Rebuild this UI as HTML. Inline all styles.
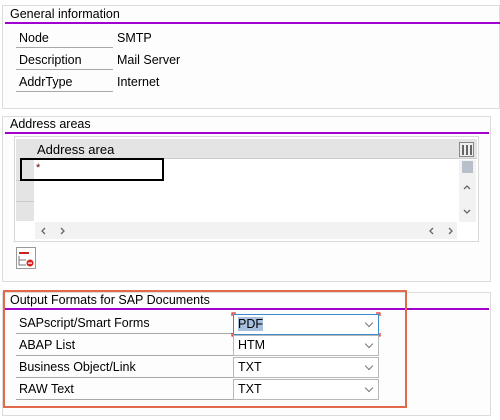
<!DOCTYPE html>
<html><head><style>
*{box-sizing:border-box;margin:0;padding:0}
body{width:500px;height:420px;background:#fff;font-family:"Liberation Sans","DejaVu Sans",sans-serif;font-size:12.5px;color:#000;position:relative;overflow:hidden}
.a{position:absolute}
.grp{position:absolute;border:1px solid #dcdcdc;background:#fdfdfd}
.title{position:absolute;left:10px;font-size:12.5px}
.pl{position:absolute;height:2px;background:#a000d0}
.lab{position:absolute;left:16px;width:97px;height:20px;border-bottom:1px solid #a8a8a8;padding-left:3px;line-height:20px}
.val{position:absolute;left:117px;line-height:20px}
.dd{position:absolute;left:233px;width:146px;height:21px;border:1px solid #b8b8b8;background:#fff;padding-left:4px;line-height:19px}
.dd:after{content:"";position:absolute;right:6px;top:5px;width:5px;height:5px;border-right:1px solid #777;border-bottom:1px solid #777;transform:rotate(45deg)}
.lab2{position:absolute;left:16px;width:217px;height:22px;border-bottom:1px solid #a8a8a8;padding-left:3px;line-height:22px}
.arr{position:absolute;color:#666;font-size:14px;font-weight:bold}
</style></head><body>
<div class="grp" style="left:2px;top:5px;width:498px;height:104px"></div>
<div class="title" style="top:7px">General information</div>
<div class="pl" style="left:5px;top:22px;width:495px"></div>
<div class="lab" style="top:28px">Node</div><div class="val" style="top:28px">SMTP</div>
<div class="lab" style="top:50px">Description</div><div class="val" style="top:50px">Mail Server</div>
<div class="lab" style="top:72px">AddrType</div><div class="val" style="top:72px">Internet</div>

<div class="grp" style="left:2px;top:116px;width:489px;height:166px"></div>
<div class="title" style="top:117px">Address areas</div>
<div class="pl" style="left:5px;top:132px;width:484px"></div>
<div class="a" style="left:14px;top:136px;width:465px;height:106px;border:1px solid #d8d8d8;background:#fff"></div>
<div class="a" style="left:16px;top:139px;width:18px;height:82px;background:#e4e4e4"></div>
<div class="a" style="left:16px;top:180px;width:18px;height:1px;background:#ccc"></div>
<div class="a" style="left:16px;top:201px;width:18px;height:1px;background:#ccc"></div>
<div class="a" style="left:34px;top:139px;width:443px;height:20px;background:#e4e4e4;border-bottom:1px solid #ccc;padding-left:3px;line-height:21px;font-size:13px">Address area</div>
<svg class="a" style="left:459px;top:142px" width="15" height="15"><rect x="0.5" y="0.5" width="14" height="14" fill="#eee" stroke="#888"/><g fill="#666"><rect x="3" y="3" width="2" height="10"/><rect x="7" y="3" width="2" height="10"/><rect x="11" y="3" width="2" height="10"/></g></svg>
<div class="a" style="left:459px;top:160px;width:17px;height:62px;background:#f2f2f2"></div>
<div class="a" style="left:462px;top:161px;width:11px;height:12px;background:#b8c0cc"></div>
<svg class="a" style="left:462px;top:183px" width="10" height="36"><path d="M2 6l3-3 3 3M2 27l3 3 3-3" stroke="#666" stroke-width="1.3" fill="none"/></svg>
<div class="a" style="left:20px;top:158px;width:144px;height:23px;border:2px solid #000"></div>
<div class="a" style="left:36px;top:162px;color:#600;font-size:11px">*</div>
<div class="a" style="left:35px;top:222px;width:422px;height:17px;background:#f2f2f2"></div>
<svg class="a" style="left:40px;top:226px" width="30" height="10"><path d="M5 2L2 5l3 3M21 2l3 3-3 3" stroke="#666" stroke-width="1.3" fill="none"/></svg>
<svg class="a" style="left:428px;top:226px" width="30" height="10"><path d="M5 2L2 5l3 3M21 2l3 3-3 3" stroke="#666" stroke-width="1.3" fill="none"/></svg>
<svg class="a" style="left:16px;top:247px" width="20" height="22"><rect x="0.5" y="0.5" width="19" height="21" fill="#fff" stroke="#999"/><rect x="3" y="5" width="10" height="2" fill="#c22"/><path d="M3 9v9h7M3 13h7" stroke="#777" fill="none"/><circle cx="14" cy="16" r="3.5" fill="#d22"/><rect x="12" y="15.5" width="4" height="1.2" fill="#fff"/></svg>

<div class="grp" style="left:2px;top:292px;width:489px;height:124px"></div>
<div class="title" style="top:293px">Output Formats for SAP Documents</div>
<div class="pl" style="left:5px;top:308px;width:484px"></div>
<div class="a" style="left:3px;top:290px;width:404px;height:118px;border:2px solid #e06a4a"></div>
<div class="lab2" style="top:312px">SAPscript/Smart Forms</div>
<div class="lab2" style="top:334px">ABAP List</div>
<div class="lab2" style="top:356px">Business Object/Link</div>
<div class="lab2" style="top:378px">RAW Text</div>
<div class="dd" style="top:314px;border-color:#3a8ad0"><span style="background:#a8c0e0">PDF</span></div>
<svg class="a" style="left:231px;top:312px" width="150" height="25"><path d="M1 4V1h4M145 1h4v3M1 21v3h4M145 24h4v-3" stroke="#d00" fill="none"/></svg>
<div class="dd" style="top:335px">HTM</div>
<div class="dd" style="top:357px">TXT</div>
<div class="dd" style="top:379px">TXT</div>
</body></html>
